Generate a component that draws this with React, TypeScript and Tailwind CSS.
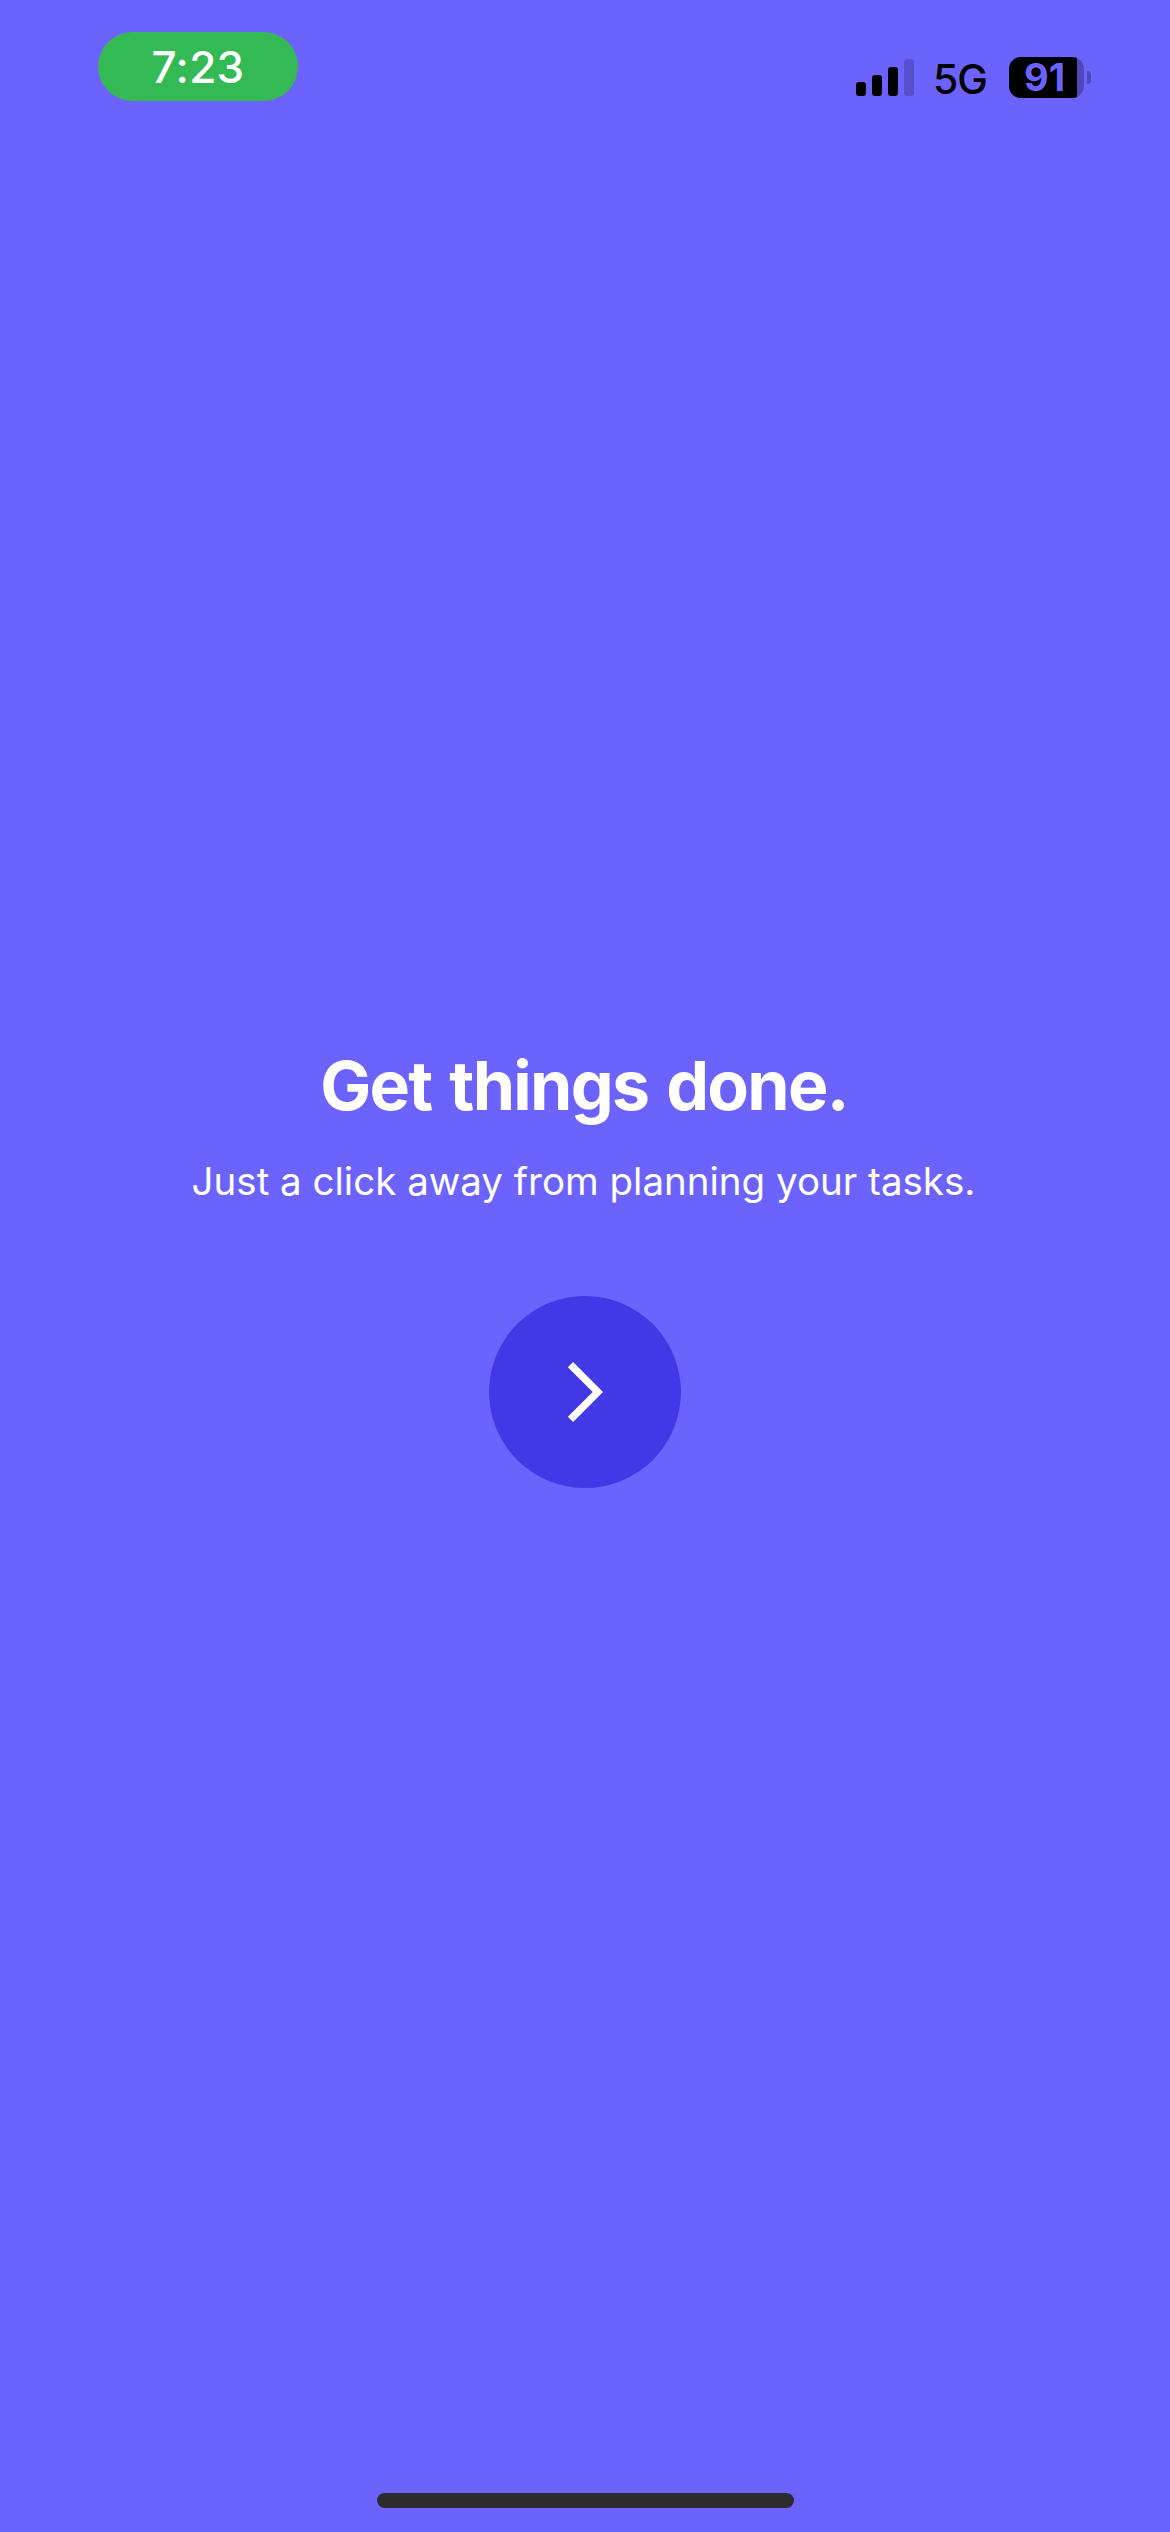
function StatusBar() {
  return (
    <header className="flex h-[141px] items-start justify-between pl-[98px] pr-[79px]">
      <div className="mt-8 flex h-[69px] w-[200px] items-center justify-center rounded-full bg-[#34ba55] text-[44px] font-medium leading-none text-white">
        <span className="tracking-[0.3px]">7:23</span>
      </div>
      <div className="mt-[57px] flex h-[41px] items-center text-black">
        <div className="flex h-[37px] items-end gap-1.5">
          <span className="h-3.5 w-2.5 rounded-[3px] bg-black" />
          <span className="h-[21px] w-2.5 rounded-[3px] bg-black" />
          <span className="h-[29px] w-2.5 rounded-[3px] bg-black" />
          <span className="h-[37px] w-2.5 rounded-[3px] bg-[#574fcc]" />
        </div>
        <span className="ml-[19px] w-[57px] whitespace-nowrap pt-1 text-[41px] font-medium leading-[41px] tracking-[-1px]">5G</span>
        <div className="ml-[19px] flex h-[41px] w-[75px] overflow-hidden rounded-[12px] bg-[#4f48b8]">
          <div className="flex h-full w-[68px] items-center justify-center bg-black pb-0.5 pl-[3px] text-[38px] font-bold leading-none text-[#6c63ff]">
            91
          </div>
        </div>
        <span className="ml-[3px] h-[13px] w-1 rounded-r-full bg-[#4f48b8]" />
      </div>
    </header>
  );
}

export default function App() {
  return (
    <div className="flex h-[2532px] w-[1170px] flex-col overflow-hidden bg-[#6c63ff] font-['Inter',sans-serif]">
      <StatusBar />
      <main className="flex flex-1 flex-col items-center pt-[902px] text-white">
        <h1 className="whitespace-nowrap pr-0.5 text-[68px] font-bold leading-[84px] tracking-[-1.7px] [word-spacing:3.4px]">
          Get things done.
        </h1>
        <p className="mt-[25px] whitespace-nowrap pr-[3px] text-[38.5px] leading-[58px]">
          Just a click away from planning your tasks.
        </p>
        <button
          type="button"
          aria-label="Continue"
          className="mt-[86px] flex size-48 items-center justify-center rounded-full bg-[#4338e6]"
        >
          <svg viewBox="0 0 192 192" className="size-48" fill="none">
            <path d="M81.5 68.7 108.8 96 81.5 123.3" stroke="white" strokeWidth="7.4" />
          </svg>
        </button>
      </main>
      <footer className="flex h-[39px] justify-center pl-px">
        <div className="h-[15px] w-[417px] rounded-full bg-[#2c2c2c]" />
      </footer>
    </div>
  );
}
